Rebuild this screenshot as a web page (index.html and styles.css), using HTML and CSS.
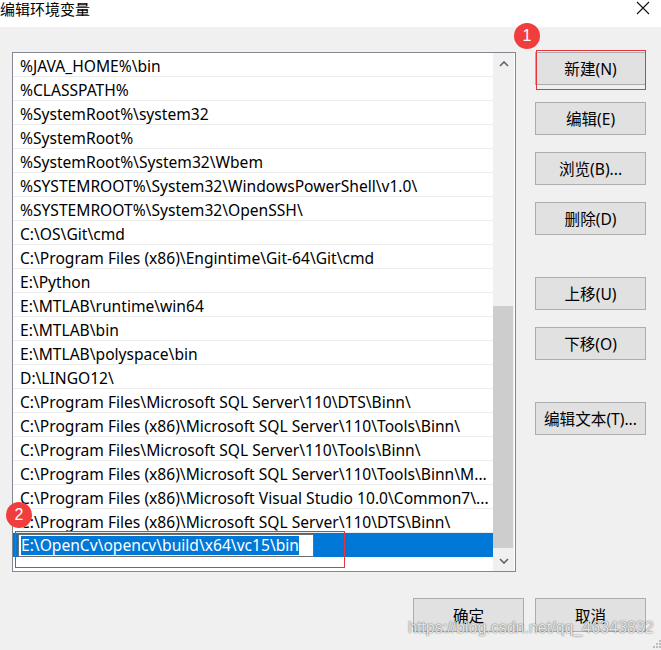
FILE: index.html
```html
<!DOCTYPE html>
<html lang="zh-CN">
<head>
    <meta charset="UTF-8">
    <meta name="viewport" content="width=device-width, initial-scale=1.0">
    <title>编辑环境变量</title>
    <link rel="stylesheet" href="styles.css">
</head>
<body>
    <div class="titlebar">
        <span class="title">编辑环境变量</span>
        <svg class="close" width="14" height="14" viewBox="0 0 14 14">
            <path d="M1 1 L13 13 M13 1 L1 13" stroke="#111" stroke-width="1.1" fill="none"/>
        </svg>
    </div>

    <div class="main">
        <div class="listbox">
            <ul class="rows">
                <li>%JAVA_HOME%\bin</li>
                <li>%CLASSPATH%</li>
                <li>%SystemRoot%\system32</li>
                <li>%SystemRoot%</li>
                <li>%SystemRoot%\System32\Wbem</li>
                <li>%SYSTEMROOT%\System32\WindowsPowerShell\v1.0\</li>
                <li>%SYSTEMROOT%\System32\OpenSSH\</li>
                <li>C:\OS\Git\cmd</li>
                <li>C:\Program Files (x86)\Engintime\Git-64\Git\cmd</li>
                <li>E:\Python</li>
                <li>E:\MTLAB\runtime\win64</li>
                <li>E:\MTLAB\bin</li>
                <li>E:\MTLAB\polyspace\bin</li>
                <li>D:\LINGO12\</li>
                <li>C:\Program Files\Microsoft SQL Server\110\DTS\Binn\</li>
                <li>C:\Program Files (x86)\Microsoft SQL Server\110\Tools\Binn\</li>
                <li>C:\Program Files\Microsoft SQL Server\110\Tools\Binn\</li>
                <li>C:\Program Files (x86)\Microsoft SQL Server\110\Tools\Binn\M...</li>
                <li>C:\Program Files (x86)\Microsoft Visual Studio 10.0\Common7\...</li>
                <li>C:\Program Files (x86)\Microsoft SQL Server\110\DTS\Binn\</li>
                <li class="selected">
                    <span class="edit"><span class="sel">E:\OpenCv\opencv\build\x64\vc15\bin</span></span>
                </li>
            </ul>
            <div class="scrollbar">
                <div class="arrow">
                    <svg width="10" height="6" viewBox="0 0 10 6"><path d="M1 5 L5 1 L9 5" stroke="#606060" stroke-width="1.6" fill="none"/></svg>
                </div>
                <div class="track"><div class="thumb"></div></div>
                <div class="arrow">
                    <svg width="10" height="6" viewBox="0 0 10 6"><path d="M1 1 L5 5 L9 1" stroke="#606060" stroke-width="1.6" fill="none"/></svg>
                </div>
            </div>
        </div>

        <div class="side">
            <div class="group">
                <button class="btn">新建(N)</button>
                <button class="btn">编辑(E)</button>
                <button class="btn">浏览(B)...</button>
                <button class="btn">删除(D)</button>
            </div>
            <div class="group">
                <button class="btn">上移(U)</button>
                <button class="btn">下移(O)</button>
            </div>
            <div class="group">
                <button class="btn">编辑文本(T)...</button>
            </div>
        </div>
    </div>

    <div class="footer">
        <button class="btn">确定</button>
        <button class="btn">取消</button>
    </div>

    <!-- annotations drawn over the dialog -->
    <div class="mark mark-new"></div>
    <div class="mark mark-row"></div>
    <div class="badge badge-1">1</div>
    <div class="badge badge-2">2</div>
    <div class="watermark">https://blog.csdn.net/qq_46343832</div>
    <svg class="grip" width="8" height="10" viewBox="0 0 8 10">
        <rect x="6" y="0" width="2" height="2" fill="#bbb"/>
        <rect x="3" y="3" width="2" height="2" fill="#bbb"/>
        <rect x="6" y="3" width="2" height="2" fill="#bbb"/>
        <rect x="0" y="6" width="2" height="2" fill="#bbb"/>
        <rect x="3" y="6" width="2" height="2" fill="#bbb"/>
        <rect x="6" y="6" width="2" height="2" fill="#bbb"/>
    </svg>
</body>
</html>
```

FILE: styles.css
```css
* {
    margin: 0;
    padding: 0;
    box-sizing: border-box;
}
body {
    width: 661px;
    height: 650px;
    overflow: hidden;
    position: relative;
    background-color: #f0f0f0;
    font-family: "Noto Sans", "Noto Sans CJK SC", sans-serif;
    font-size: 15.6px;
    color: #000;
}
.titlebar {
    height: 27px;
    background-color: #fff;
    display: flex;
    align-items: flex-start;
    justify-content: space-between;
}
.title {
    font-family: "Noto Sans CJK SC", sans-serif;
    font-size: 15px;
    line-height: 20px;
    margin-top: -1px;
}
.close {
    margin-top: 1px;
    margin-right: 11px;
}
.main {
    display: flex;
    padding: 25px 0 0 12px;
}
.listbox {
    width: 504px;
    height: 520px;
    border: 1px solid #828790;
    background-color: #fff;
    display: flex;
}
.rows {
    list-style: none;
    width: 480px;
}
.rows li {
    height: 24px;
    line-height: 22px;
    padding: 2px 0 0 7px;
    border-bottom: 1px solid #ececec;
    white-space: nowrap;
    overflow: hidden;
}
.rows li.selected {
    background-color: #0078d7;
    border-bottom: none;
    padding-left: 5px;
    padding-top: 1px;
    line-height: 23px;
}
.edit {
    display: inline-block;
    width: 296px;
    height: 23px;
    border: 1px solid #6e6e6e;
    background-color: #fff;
    padding: 1px 0 0 2px;
    line-height: 19px;
}
.sel {
    display: inline-block;
    background-color: #0078d7;
    color: #fff;
}
.scrollbar {
    width: 21px;
    display: flex;
    flex-direction: column;
    background-color: #f0f0f0;
}
.arrow {
    height: 21px;
    display: flex;
    align-items: center;
    justify-content: center;
}
.track {
    flex: 1;
    padding-top: 232px;
}
.thumb {
    height: 242px;
    width: 20px;
    background-color: #cdcdcd;
}
.side {
    margin-left: 19px;
    display: flex;
    flex-direction: column;
    gap: 42px;
}
.group {
    display: flex;
    flex-direction: column;
    gap: 17px;
}
.btn {
    width: 111px;
    height: 33px;
    border: 1px solid #adadad;
    background-color: #e1e1e1;
    font-family: "Noto Sans", "Noto Sans CJK SC", sans-serif;
    font-size: 15.6px;
    color: #000;
}
.footer {
    display: flex;
    justify-content: flex-end;
    gap: 11px;
    padding: 26px 15px 0 0;
}
.footer .btn {
    height: 34px;
}
.mark {
    position: absolute;
    border: 1px solid #e8343a;
}
.mark-new {
    left: 536px;
    top: 50px;
    width: 110px;
    height: 40px;
}
.mark-row {
    left: 15px;
    top: 531px;
    width: 330px;
    height: 37px;
}
.badge {
    position: absolute;
    width: 26px;
    height: 26px;
    border-radius: 50%;
    background-color: #f03d3d;
    color: #fff;
    font-family: "Liberation Sans", sans-serif;
    font-size: 16px;
    line-height: 26px;
    text-align: center;
}
.badge-1 {
    left: 514px;
    top: 23px;
}
.badge-2 {
    left: 6px;
    top: 502px;
}
.watermark {
    position: absolute;
    left: 408px;
    top: 619px;
    font-family: "Liberation Sans", sans-serif;
    font-size: 16px;
    color: rgba(255, 255, 255, 0.85);
    text-shadow: 0 0 1px rgba(0, 0, 0, 0.55), 0 0 2px rgba(0, 0, 0, 0.3);
}
.grip {
    position: absolute;
    right: 0;
    bottom: 0;
}
```
